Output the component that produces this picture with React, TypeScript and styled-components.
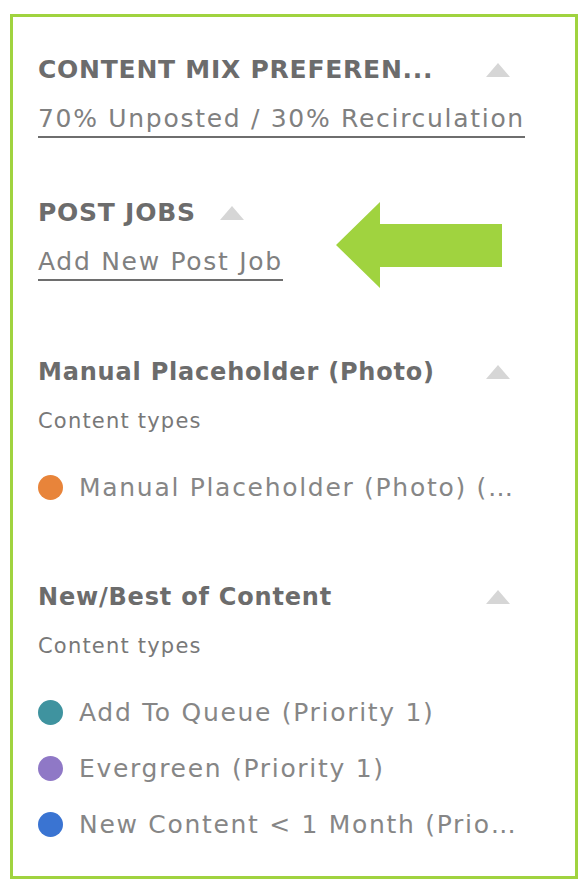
import styled, { createGlobalStyle } from 'styled-components';

const GlobalStyle = createGlobalStyle`
  body {
    margin: 0;
    background: #ffffff;
    font-family: 'DejaVu Sans', 'Liberation Sans', sans-serif;
  }
`;

const Panel = styled.div`
  position: relative;
  box-sizing: border-box;
  width: 568px;
  height: 865px;
  margin: 14px 0 0 10px;
  border: 3px solid #a0d33f;
  padding: 38px 65px 0 25px;
`;

const Section = styled.section<{ $top: number }>`
  margin-top: ${(p) => p.$top}px;
`;

const HeadingRow = styled.div<{ $inline?: boolean }>`
  display: flex;
  align-items: center;
  justify-content: ${(p) => (p.$inline ? 'flex-start' : 'space-between')};
  gap: 24px;
  height: 30px;
`;

const Title = styled.h2<{ $caps?: boolean }>`
  margin: 0;
  font-size: ${(p) => (p.$caps ? '25px' : '24px')};
  line-height: 30px;
  font-weight: 700;
  color: #6c6c6c;
  letter-spacing: ${(p) => (p.$caps ? '0.75px' : '0.8px')};
  white-space: nowrap;
`;

const Caret = styled.span`
  width: 0;
  height: 0;
  border-left: 12px solid transparent;
  border-right: 12px solid transparent;
  border-bottom: 14px solid #d6d6d6;
`;

const Link = styled.a`
  display: inline-block;
  margin-top: 17px;
  font-size: 25px;
  font-weight: 400;
  line-height: 34px;
  color: #808080;
  letter-spacing: 1.7px;
  text-decoration: none;
  border-bottom: 2px solid #6e6e6e;
  white-space: nowrap;
`;

const Label = styled.div`
  margin-top: 21px;
  font-size: 21px;
  line-height: 26px;
  color: #787878;
  letter-spacing: 1.2px;
`;

const TypeList = styled.ul`
  list-style: none;
  margin: 36px 0 0;
  padding: 0;
  display: flex;
  flex-direction: column;
  gap: 22px;
`;

const TypeItem = styled.li`
  display: flex;
  align-items: center;
  gap: 16px;
  height: 34px;
  font-size: 25px;
  font-weight: 400;
  color: #868686;
  letter-spacing: 1.7px;
  white-space: nowrap;
`;

const Dot = styled.span<{ $color: string }>`
  flex: none;
  width: 25px;
  height: 25px;
  border-radius: 50%;
  background: ${(p) => p.$color};
`;

const Arrow = styled.svg`
  position: absolute;
  left: 323px;
  top: 185px;
`;

type ContentType = { name: string; color: string };

const Types = ({ items }: { items: ContentType[] }) => (
  <>
    <Label>Content types</Label>
    <TypeList>
      {items.map((t) => (
        <TypeItem key={t.name}>
          <Dot $color={t.color} />
          {t.name}
        </TypeItem>
      ))}
    </TypeList>
  </>
);

export default function App() {
  return (
    <>
      <GlobalStyle />
      <Panel>
        <Section $top={0}>
          <HeadingRow>
            <Title $caps>CONTENT MIX PREFEREN...</Title>
            <Caret />
          </HeadingRow>
          <Link href="#">70% Unposted / 30% Recirculation</Link>
        </Section>

        <Section $top={60}>
          <HeadingRow $inline>
            <Title $caps>POST JOBS</Title>
            <Caret />
          </HeadingRow>
          <Link href="#">Add New Post Job</Link>
        </Section>

        <Section $top={76}>
          <HeadingRow>
            <Title>Manual Placeholder (Photo)</Title>
            <Caret />
          </HeadingRow>
          <Types items={[{ name: 'Manual Placeholder (Photo) (…', color: '#e8843a' }]} />
        </Section>

        <Section $top={78}>
          <HeadingRow>
            <Title>New/Best of Content</Title>
            <Caret />
          </HeadingRow>
          <Types
            items={[
              { name: 'Add To Queue (Priority 1)', color: '#3f939f' },
              { name: 'Evergreen (Priority 1)', color: '#8f78c6' },
              { name: 'New Content < 1 Month (Prio…', color: '#3a74d2' },
            ]}
          />
        </Section>

        <Arrow width="166" height="86" viewBox="0 0 166 86">
          <path d="M0 43 L44 0 L44 22 L166 22 L166 65 L44 65 L44 86 Z" fill="#a0d33f" />
        </Arrow>
      </Panel>
    </>
  );
}
